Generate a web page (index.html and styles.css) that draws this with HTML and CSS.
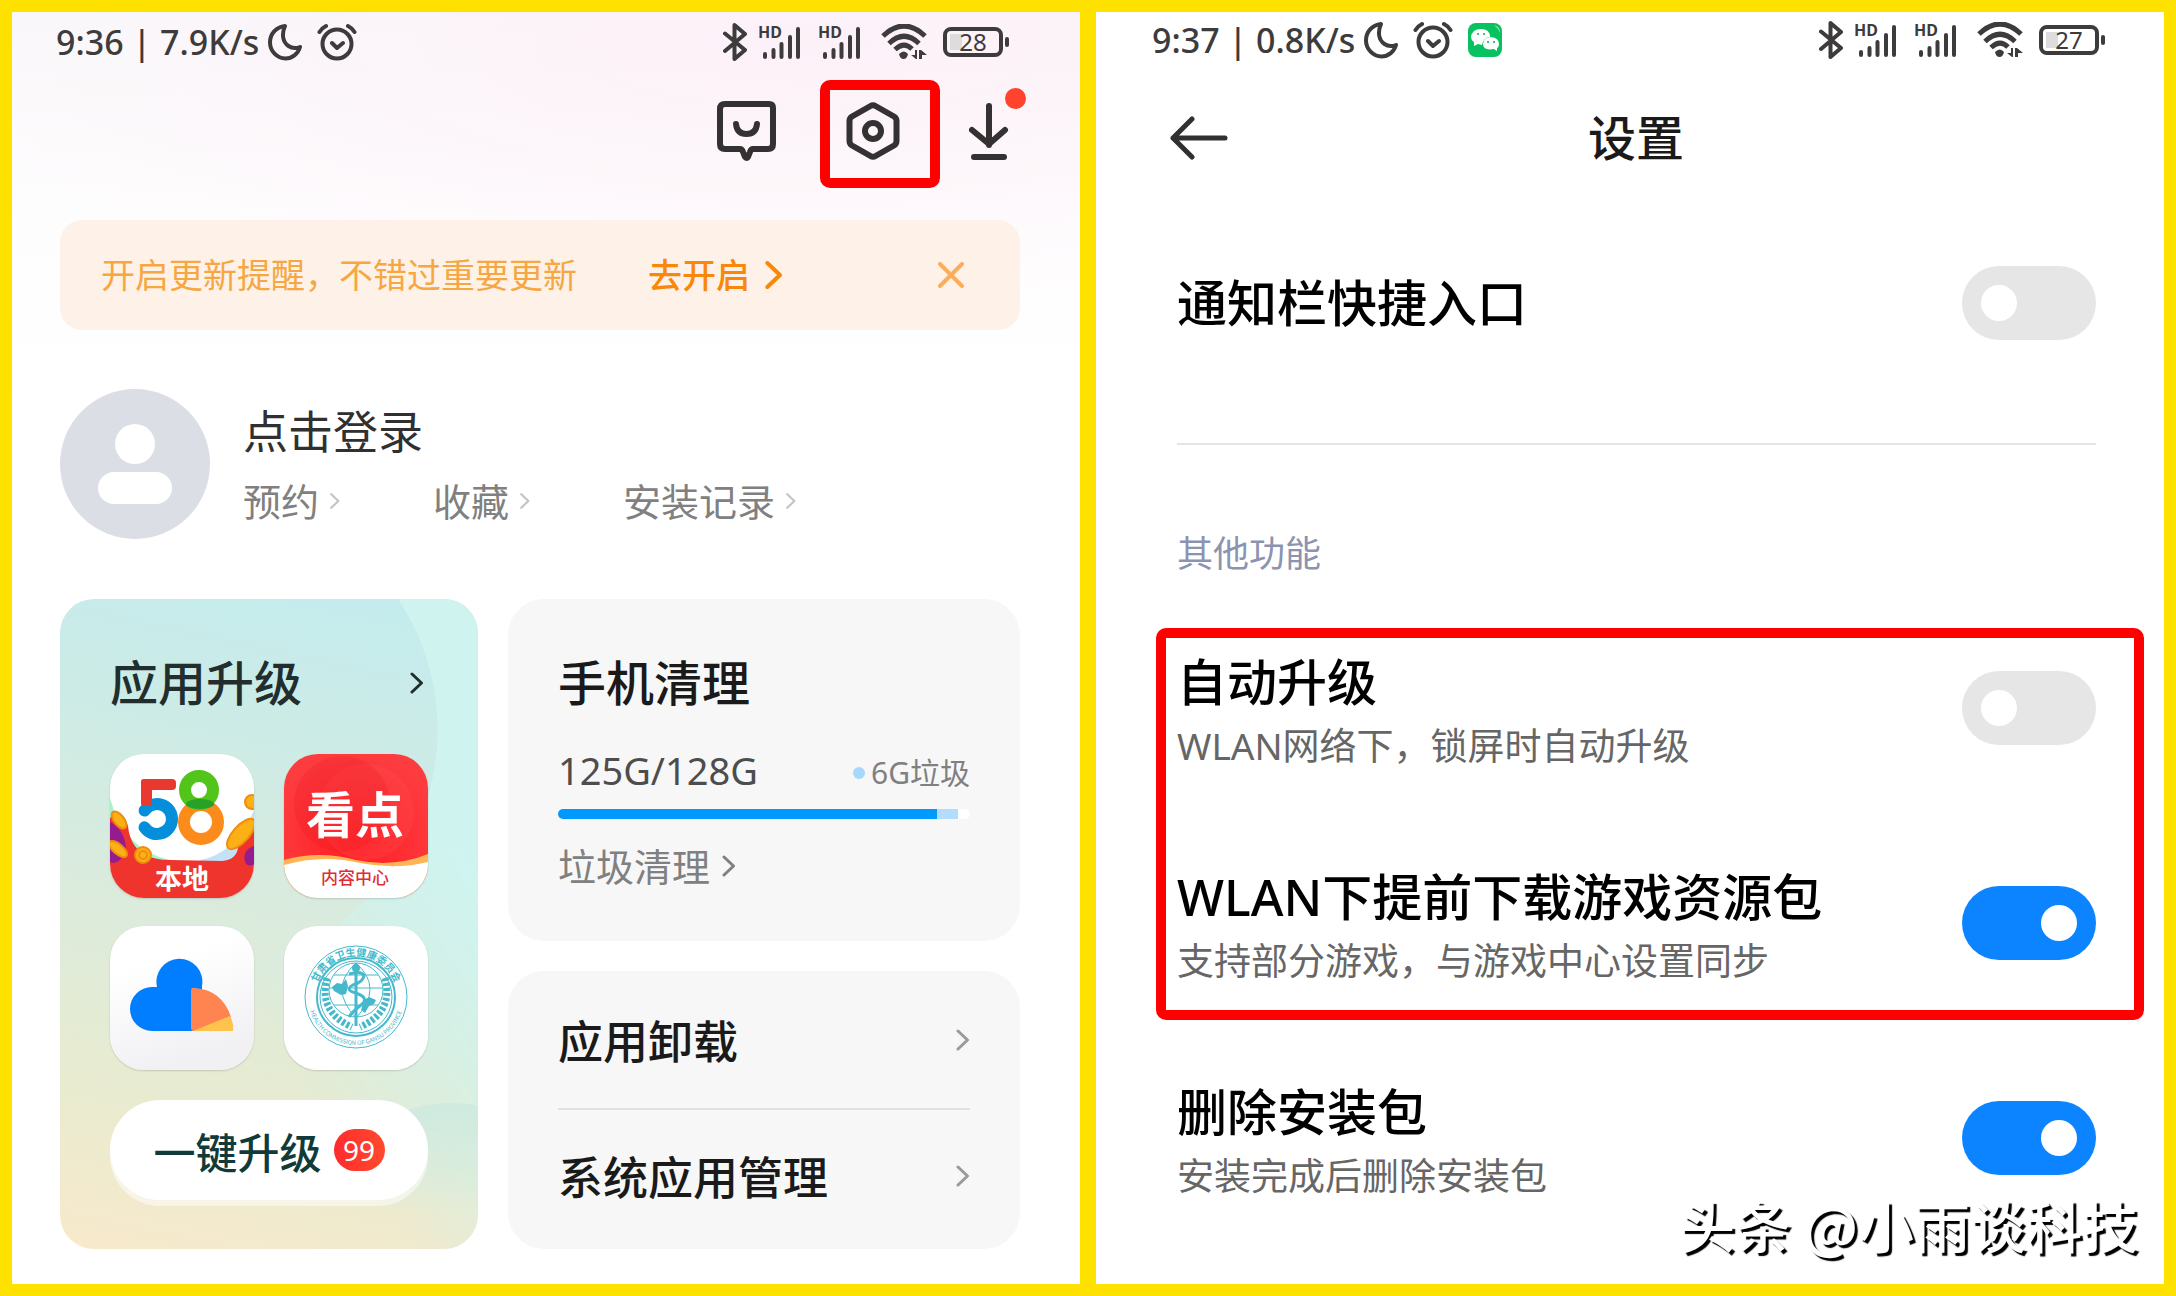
FILE: index.html
```html
<!DOCTYPE html>
<html lang="zh-CN">
<head>
  <meta charset="UTF-8" />
  <meta name="viewport" content="width=device-width, initial-scale=1.0" />
  <title>应用商店设置</title>
  <link rel="stylesheet" href="styles.css">
</head>
<body>

<!-- Shared icons -->
<svg class="sprite" aria-hidden="true">
  <symbol id="i-moon" viewBox="0 0 34 38">
    <path d="M17 3C8 4 2 11 2 19.500C2 28 9 35.500 17.500 35.500C24 35.500 30 31 32 24C28 25.500 24 25.500 20.500 23C14.500 19 13.500 11 17 3Z" fill="none" stroke="currentColor" stroke-width="4" stroke-linejoin="round"/>
  </symbol>
  <symbol id="i-alarm" viewBox="0 0 40 38">
    <g fill="none" stroke="currentColor" stroke-width="4" stroke-linecap="round" stroke-linejoin="round">
      <circle cx="20" cy="21" r="14.500"/>
      <path d="M2.500 9Q5 5 9 3M37.500 9Q35 5 31 3M15 20l5 5 6-5"/>
    </g>
  </symbol>
  <symbol id="i-bt" viewBox="0 0 24 38">
    <path d="M2 10.500L22 27 11.500 36V2L22 11 2 28" fill="none" stroke="currentColor" stroke-width="4" stroke-linejoin="round" stroke-linecap="round"/>
  </symbol>
  <symbol id="i-hd" viewBox="0 0 41 34">
    <text x="-1" y="13" font-size="16" font-weight="700" fill="currentColor">HD</text>
    <path d="M6 32V29M14.500 32V25M22.500 32V19M31 32V12M39 32V4" stroke="currentColor" stroke-width="4" stroke-linecap="round"/>
  </symbol>
  <symbol id="i-wifi" viewBox="0 0 46 36">
    <path d="M2 12Q23-8 44 12M8 19.500Q23 5 38 19.500M14 25.500Q23 17 31 25" fill="none" stroke="currentColor" stroke-width="5"/>
    <path d="M18 30Q23 25 27 30Q26 35 22.500 35Q19 35 18 30ZM38 35V26H40L46 31H41V35ZM36 26V35H35L30 31H34V26Z" fill="currentColor"/>
  </symbol>
  <symbol id="i-chevron" viewBox="0 0 14 24">
    <path d="M2 3l9.500 9L2 21" fill="none" stroke="currentColor" stroke-width="3" stroke-linecap="round" stroke-linejoin="round"/>
  </symbol>
</svg>

<main class="compare">

  <!-- Left: "mine" page -->
  <section class="phone mine">
    <div class="status">
      <div class="status-left">
        <span>9:36 | 7.9K/s</span>
        <svg class="moon"><use href="#i-moon"/></svg>
        <svg class="alarm"><use href="#i-alarm"/></svg>
      </div>
      <div class="status-right">
        <svg class="bt"><use href="#i-bt"/></svg>
        <svg class="hd"><use href="#i-hd"/></svg>
        <svg class="hd"><use href="#i-hd"/></svg>
        <svg class="wifi"><use href="#i-wifi"/></svg>
        <span class="battery">28</span>
      </div>
    </div>

    <nav class="tools">
      <button type="button" aria-label="消息">
        <svg width="60" height="62" viewBox="0 0 60 62" fill="none" stroke="currentColor" stroke-width="6" stroke-linecap="round" stroke-linejoin="round">
          <path d="M8 4H52Q56 4 56 8V44Q56 49 51 49H36Q34 49 33 52L31 57Q30 59 28 57L26 52Q25 49 23 49H8Q3 49 3 44V9Q3 4 8 4Z"/>
          <path d="M19 24Q20 34 29.500 34Q39 34 40 24"/>
        </svg>
      </button>
      <button type="button" class="marked" aria-label="设置">
        <svg width="54" height="58" viewBox="0 0 54 58" fill="none" stroke="currentColor" stroke-width="6" stroke-linejoin="round">
          <path d="M24.500 4Q27 2.500 29.500 4L48 14.500Q50.500 16 50.500 19V39Q50.500 42 48 43.500L29.500 54Q27 55.500 24.500 54L6 43.500Q3.500 42 3.500 39V19Q3.500 16 6 14.500Z"/>
          <circle cx="27" cy="29" r="8"/>
        </svg>
      </button>
      <button type="button" class="download" aria-label="下载">
        <svg width="40" height="58" viewBox="0 0 40 58" fill="none" stroke="currentColor" stroke-width="6" stroke-linecap="round" stroke-linejoin="round">
          <path d="M20 4V43M3 28L20 42 36 28M5 55H35"/>
        </svg>
      </button>
    </nav>

    <div class="notice">
      <span>开启更新提醒，不错过重要更新</span>
      <a href="#" class="notice-link">去开启 <svg class="chev-lg"><use href="#i-chevron"/></svg></a>
      <button type="button" class="notice-close" aria-label="关闭">
        <svg width="26" height="26" viewBox="0 0 26 26"><path d="M2 2L24 24M24 2L2 24" stroke="currentColor" stroke-width="4" stroke-linecap="round"/></svg>
      </button>
    </div>

    <div class="profile">
      <svg class="avatar" viewBox="0 0 150 150" aria-hidden="true">
        <circle cx="75" cy="75" r="75" fill="#dbdfe5"/>
        <circle cx="75" cy="55" r="20" fill="#fff"/>
        <rect x="38" y="83" width="74" height="32" rx="16" fill="#fff"/>
      </svg>
      <div>
        <a href="#" class="login">点击登录</a>
        <div class="links">
          <a href="#">预约<svg class="chev-sm"><use href="#i-chevron"/></svg></a>
          <a href="#">收藏<svg class="chev-sm"><use href="#i-chevron"/></svg></a>
          <a href="#">安装记录<svg class="chev-sm"><use href="#i-chevron"/></svg></a>
        </div>
      </div>
    </div>

    <div class="cards">
      <section class="upgrade">
        <a href="#" class="card-head"><h2>应用升级</h2><svg class="chev"><use href="#i-chevron"/></svg></a>
        <div class="apps">
          <!-- 58 local -->
          <svg class="app" viewBox="0 0 144 144">
            <rect width="144" height="144" fill="#fff"/>
            <path d="M0 44Q14 96 60 106L40 112 0 100Z" fill="#a8f3c8"/>
            <path d="M90 106Q125 100 144 56V110H90Z" fill="#c3e2f8"/>
            <path d="M0 64Q12 52 18 72Q20 92 34 100Q44 106 60 106L112 107Q126 106 128 94Q134 78 144 70V144H0Z" fill="#ee342c"/>
            <path d="M0 68Q16 76 16 98Q8 112 0 108ZM144 92Q132 96 135 108Q138 114 144 110Z" fill="#951b91"/>
            <g fill="#fbb116" stroke="#f08c10" stroke-width="2">
              <ellipse cx="9" cy="66" rx="5" ry="10" transform="rotate(-38 9 66)"/>
              <ellipse cx="8" cy="95" rx="5" ry="11" transform="rotate(-50 8 95)"/>
              <ellipse cx="131" cy="80" rx="8" ry="19" transform="rotate(42 131 80)"/>
              <circle cx="142" cy="48" r="7"/>
              <circle cx="33" cy="101" r="8"/>
              <circle cx="33" cy="101" r="4"/>
            </g>
            <g fill="none">
              <circle cx="91" cy="68" r="17" stroke="#fb8c1c" stroke-width="12"/>
              <circle cx="89" cy="36" r="14" stroke="#52c41a" stroke-width="12"/>
              <circle cx="47" cy="65" r="15" stroke="#058fda" stroke-width="12" stroke-linecap="round" stroke-dasharray="76 19" transform="rotate(214 47 65)"/>
            </g>
            <ellipse cx="90" cy="50" rx="14" ry="5" fill="#27a127"/>
            <rect x="31" y="25" width="11" height="27" rx="3" fill="#e9392f"/>
            <rect x="31" y="25" width="35" height="11" rx="4" fill="#e9392f"/>
            <text x="72" y="135" class="app-local">本地</text>
          </svg>
          <!-- content centre -->
          <svg class="app" viewBox="0 0 144 144">
            <defs>
              <radialGradient id="red" cx="50%" cy="60%" r="60%">
                <stop offset="0" stop-color="#ff1c20"/><stop offset="1" stop-color="#fd3c40"/>
              </radialGradient>
            </defs>
            <rect width="144" height="144" fill="url(#red)"/>
            <circle cx="82" cy="58" r="48" fill="#ff5558" opacity=".25"/>
            <circle cx="58" cy="50" r="48" fill="#e8141c" opacity=".2"/>
            <path d="M0 106Q35 96 72 106Q110 114 144 100V144H0Z" fill="#ffb455"/>
            <path d="M0 111Q38 100 76 109Q112 116 144 108V144H0Z" fill="#fff"/>
            <text x="71" y="79" class="app-kan">看点</text>
            <text x="71" y="130" class="app-center">内容中心</text>
          </svg>
          <!-- weather -->
          <svg class="app" viewBox="0 0 144 144">
            <defs>
              <linearGradient id="pale" x1="0" y1="0" x2=".3" y2="1">
                <stop offset=".3" stop-color="#fff"/><stop offset="1" stop-color="#f1f1f4"/>
              </linearGradient>
            </defs>
            <rect width="144" height="144" fill="url(#pale)"/>
            <path d="M42 105A22 22 0 0 1 42 61H47A23 23 0 1 1 92 60V105Z" fill="#007eff"/>
            <path d="M81 65Q81 61 85 62Q112 64 121 91L84 105Q81 105 81 102Z" fill="#ff844f"/>
            <path d="M83 105L120 90Q124 98 123 105Z" fill="#ffc34d"/>
          </svg>
          <!-- health commission -->
          <svg class="app" viewBox="0 0 144 144">
            <defs>
              <path id="arc-top" d="M31 71A41 41 0 0 1 113 71"/>
              <path id="arc-bottom" d="M24 71A48 48 0 0 0 120 71"/>
            </defs>
            <rect width="144" height="144" fill="#fff"/>
            <g fill="none" stroke="#45b9cb">
              <circle cx="72" cy="71" r="51" stroke-width="1"/>
              <circle cx="72" cy="71" r="39" stroke-width="2"/>
              <circle cx="72" cy="71" r="36" stroke-width="1"/>
              <ellipse cx="72" cy="64" rx="27" ry="27" stroke-width="1"/>
              <path d="M45 62H99M50 49H94M50 79H94M72 37V92M72 37Q44 62 72 92M72 37Q100 62 72 92" stroke-width="1"/>
              <path d="M43 52Q34 86 68 101M101 52Q110 86 76 101" stroke-width="7" stroke-dasharray="3 2"/>
              <path d="M65 48Q78 44 80 50Q79 56 69 59Q60 64 72 67Q86 72 77 79Q68 86 65 91" stroke-width="3"/>
              <path d="M72 44V100" stroke-width="3"/>
            </g>
            <path d="M48 61l5-4 5 1 4-5 2 7-2 8-5 1-7-4ZM77 84l3-10 5-3 7 3-2 4-5 2-4 7Z" fill="#45b9cb"/>
            <circle cx="72" cy="42" r="4" fill="#45b9cb"/>
            <text class="seal-cn"><textPath href="#arc-top" startOffset="50%">甘肃省卫生健康委员会</textPath></text>
            <text class="seal-en"><textPath href="#arc-bottom" startOffset="50%">HEALTH COMMISSION OF GANSU PROVINCE</textPath></text>
          </svg>
        </div>
        <button type="button" class="upgrade-all">一键升级<span class="count">99</span></button>
      </section>

      <div class="side">
        <section class="card clean">
          <h2>手机清理</h2>
          <div class="usage">
            <span class="used">125G/128G</span>
            <span class="junk">6G垃圾</span>
          </div>
          <div class="bar"><i class="bar-used" style="width: 92%"></i><i class="bar-junk" style="width: 5%"></i></div>
          <a href="#" class="clean-link">垃圾清理<svg class="chev"><use href="#i-chevron"/></svg></a>
        </section>
        <section class="card menu">
          <a href="#">应用卸载<svg class="chev"><use href="#i-chevron"/></svg></a>
          <a href="#">系统应用管理<svg class="chev"><use href="#i-chevron"/></svg></a>
        </section>
      </div>
    </div>
  </section>

  <!-- Right: settings page -->
  <section class="phone settings">
    <div class="status">
      <div class="status-left">
        <span>9:37 | 0.8K/s</span>
        <svg class="moon"><use href="#i-moon"/></svg>
        <svg class="alarm"><use href="#i-alarm"/></svg>
        <svg class="wechat" viewBox="0 0 34 34">
          <rect width="34" height="34" rx="8" fill="#08c160"/>
          <path d="M26 2Q32 3 32 10Q30 5 26 2Z" fill="#7fe0ae"/>
          <path d="M13 6Q22 6 22 14Q16 14 14 22L10 21 6 23V19Q3 17 3 14Q4 6 13 6Z" fill="#fff"/>
          <path d="M23 14Q31 15 31 21Q31 24 29 25V28L26 26Q15 28 15 21Q16 14 23 14Z" fill="#fff"/>
          <g fill="#08a853"><circle cx="10" cy="11" r="1"/><circle cx="16" cy="11" r="1"/><circle cx="20" cy="19" r="1"/><circle cx="26" cy="19" r="1"/></g>
        </svg>
      </div>
      <div class="status-right">
        <svg class="bt"><use href="#i-bt"/></svg>
        <svg class="hd"><use href="#i-hd"/></svg>
        <svg class="hd"><use href="#i-hd"/></svg>
        <svg class="wifi"><use href="#i-wifi"/></svg>
        <span class="battery">27</span>
      </div>
    </div>

    <header class="topbar">
      <a href="#" class="back" aria-label="返回">
        <svg width="58" height="46" viewBox="0 0 58 46" fill="none" stroke="currentColor" stroke-width="5" stroke-linecap="round" stroke-linejoin="round"><path d="M22 4L3 23 22 42M3 23H55"/></svg>
      </a>
      <h1>设置</h1>
    </header>

    <div class="list">
      <div class="row row-first">
        <label for="shortcut" class="row-title">通知栏快捷入口</label>
        <input type="checkbox" id="shortcut" class="switch">
      </div>

      <h3>其他功能</h3>

      <div class="group">
        <div class="row">
          <label for="auto">
            <span class="row-title">自动升级</span>
            <span class="row-desc">WLAN网络下，锁屏时自动升级</span>
          </label>
          <input type="checkbox" id="auto" class="switch">
        </div>
        <div class="row">
          <label for="preload">
            <span class="row-title">WLAN下提前下载游戏资源包</span>
            <span class="row-desc">支持部分游戏，与游戏中心设置同步</span>
          </label>
          <input type="checkbox" id="preload" class="switch" checked>
        </div>
      </div>
      <div class="row">
        <label for="remove">
          <span class="row-title">删除安装包</span>
          <span class="row-desc">安装完成后删除安装包</span>
        </label>
        <input type="checkbox" id="remove" class="switch" checked>
      </div>
    </div>

    <div class="watermark">头条 @小雨谈科技</div>
  </section>

</main>

</body>
</html>
```
FILE: styles.css
```css
* {
  margin: 0;
  padding: 0;
  box-sizing: border-box;
}

body {
  font-family: "Noto Sans", "Noto Sans CJK SC", sans-serif;
  background: #ffe100;
  color: #1a1a1a;
}

a {
  color: inherit;
  text-decoration: none;
}

button {
  border: none;
  background: none;
  font: inherit;
  color: inherit;
  cursor: pointer;
}

svg {
  display: block;
  flex: none;
}

h1, h2 {
  font-size: 48px;
  line-height: 60px;
  font-weight: 500;
}

.sprite {
  display: none;
}

.compare {
  display: grid;
  grid-template-columns: 1fr 1fr;
  gap: 16px;
  min-height: 100vh;
  padding: 12px;
}

.phone {
  position: relative;
  background: #fff;
}

/* status bar */
.status {
  display: flex;
  justify-content: space-between;
  align-items: center;
  color: #3d3b3c;
}

.status-left,
.status-right {
  display: flex;
  align-items: center;
}

.status-left {
  font-size: 34px;
  line-height: 40px;
  font-weight: 500;
}

.moon {
  width: 34px;
  height: 38px;
  margin-left: 9px;
}

.alarm {
  width: 40px;
  height: 38px;
  margin-left: 15px;
}

.wechat {
  width: 34px;
  height: 34px;
  margin-left: 15px;
}

.bt {
  width: 24px;
  height: 38px;
  margin-right: 12px;
}

.hd {
  width: 41px;
  height: 34px;
  margin-right: 19px;
}

.wifi {
  width: 46px;
  height: 36px;
  margin-left: 2px;
  margin-right: 16px;
}

.battery {
  position: relative;
  width: 60px;
  height: 30px;
  margin-right: 6px;
  border: 4px solid #3d3b3c;
  border-radius: 8px;
  background: linear-gradient(#ddd, #ddd) 3px 3px / 12px 16px no-repeat;
  font-size: 24px;
  line-height: 22px;
  text-align: center;
}

.battery::after {
  content: "";
  position: absolute;
  right: -10px;
  top: 6px;
  width: 4px;
  height: 10px;
  border-radius: 2px;
  background: #3d3b3c;
}

/* left phone */
.mine {
  padding: 0 60px 35px 48px;
  background:
    radial-gradient(ellipse 900px 260px at 75% 30px, #fdf1f8, rgba(253, 241, 248, 0)),
    linear-gradient(#f9f8fa, #fefdfe 200px, #fff 380px);
}

.mine .status {
  height: 60px;
  margin: 0 11px 0 -4px;
}

.tools {
  display: flex;
  justify-content: flex-end;
  align-items: center;
  gap: 69px;
  height: 102px;
  margin-top: 8px;
  padding-right: 11px;
  color: #333132;
}

.tools button {
  position: relative;
}

/* red frame round the settings button */
.marked::after {
  content: "";
  position: absolute;
  top: -22px;
  bottom: -28px;
  left: -26px;
  right: -40px;
  border: 10px solid #f00;
  border-radius: 10px;
}

.download::after {
  content: "";
  position: absolute;
  top: -14px;
  right: -17px;
  width: 21px;
  height: 21px;
  border-radius: 50%;
  background: #ff432c;
}

.notice {
  display: flex;
  align-items: center;
  height: 110px;
  margin-top: 38px;
  padding: 0 56px 0 41px;
  border-radius: 22px;
  background: #fef1e8;
  font-size: 34px;
  line-height: 50px;
  color: #f6a742;
}

.notice-link {
  display: flex;
  align-items: center;
  gap: 14px;
  margin-left: 71px;
  font-weight: 500;
  color: #f8870a;
}

.notice-close {
  margin-left: auto;
  color: #fcad59;
}

.chev-lg {
  width: 20px;
  height: 32px;
}

.chev {
  width: 14px;
  height: 24px;
}

.chev-sm {
  width: 12px;
  height: 18px;
  color: #c4c4c4;
}

.profile {
  display: flex;
  align-items: center;
  gap: 33px;
  margin-top: 59px;
}

.avatar {
  width: 150px;
  height: 150px;
}

.login {
  display: block;
  font-size: 45px;
  line-height: 60px;
  color: #303030;
}

.links {
  display: flex;
  gap: 92px;
  margin-top: 14px;
  font-size: 38px;
  line-height: 50px;
  color: #808080;
}

.links a {
  display: flex;
  align-items: center;
  gap: 10px;
}

.cards {
  display: grid;
  grid-template-columns: 418fr 512fr;
  gap: 30px;
  margin-top: 60px;
}

.upgrade {
  position: relative;
  padding: 54px 50px 49px;
  border-radius: 34px;
  overflow: hidden;
  background: linear-gradient(12deg, #f8e9cb, #e9ebd0 22%, #dcebdc 48%, #cdebe6 75%, #c3ecee);
}

/* pale sweep outside the big circle */
.upgrade::before {
  content: "";
  position: absolute;
  inset: 0;
  background: radial-gradient(circle at 140px 131px, rgba(207, 246, 244, 0) 237px, #cff4f0 238px);
  -webkit-mask-image: linear-gradient(to bottom left, #000 20%, transparent 58%);
  mask-image: linear-gradient(to bottom left, #000 20%, transparent 58%);
}

/* small hill in the bottom corner */
.upgrade::after {
  content: "";
  position: absolute;
  right: -68px;
  bottom: 10px;
  width: 192px;
  height: 136px;
  border-radius: 50%;
  background: linear-gradient(#cfeadf, rgba(230, 235, 210, 0) 80%);
}

.card-head {
  position: relative;
  display: flex;
  justify-content: space-between;
  align-items: center;
  padding-right: 4px;
  color: #222e2e;
}

.apps {
  position: relative;
  display: grid;
  grid-template-columns: 1fr 1fr;
  gap: 28px 30px;
  margin-top: 41px;
}

.app {
  width: 100%;
  border-radius: 34px;
  box-shadow: 0 1px 2px rgba(0, 0, 0, .15);
}

.app text {
  text-anchor: middle;
  font-family: "Noto Sans CJK SC", sans-serif;
}

.app-local {
  font-size: 27px;
  font-weight: 700;
  fill: #fff;
}

.app-kan {
  font-size: 49px;
  font-weight: 700;
  fill: #fff;
}

.app-center {
  font-size: 17px;
  font-weight: 500;
  fill: #e02d35;
}

.seal-cn {
  font-size: 10px;
  font-weight: 700;
  fill: #45b9cb;
}

.seal-en {
  font-size: 6px;
  fill: #45b9cb;
}

.upgrade-all {
  position: relative;
  z-index: 1;
  display: flex;
  justify-content: center;
  align-items: center;
  gap: 12px;
  width: 100%;
  height: 100px;
  margin-top: 30px;
  border-radius: 50px;
  background: #fff;
  box-shadow: 0 6px 0 rgba(255, 255, 255, .5);
  font-size: 42px;
  font-weight: 500;
  color: #103b38;
}

.count {
  width: 51px;
  border-radius: 21px;
  background: linear-gradient(to right, #ff2b2e, #ff4a2d);
  font-size: 28px;
  line-height: 42px;
  font-weight: 400;
  color: #fff;
}

.side {
  display: flex;
  flex-direction: column;
  gap: 30px;
}

.card {
  padding: 0 50px;
  border-radius: 36px;
  background: #f7f7f7;
}

.clean {
  padding-top: 54px;
  padding-bottom: 50px;
}

.usage {
  display: flex;
  justify-content: space-between;
  align-items: center;
  margin-top: 32px;
  line-height: 50px;
}

.used {
  font-size: 38px;
  color: #4d4d4d;
}

.junk {
  display: flex;
  align-items: center;
  gap: 6px;
  padding-top: 6px;
  font-size: 30px;
  line-height: 40px;
  color: #808080;
}

.junk::before {
  content: "";
  width: 12px;
  height: 12px;
  border-radius: 50%;
  background: #a6d8fb;
}

.bar {
  display: flex;
  height: 10px;
  margin-top: 14px;
  border-radius: 5px;
  overflow: hidden;
  background: #fff;
}

.bar-used {
  background: #09f;
}

.bar-junk {
  background: #b3ddff;
}

.clean-link {
  display: flex;
  align-items: center;
  gap: 12px;
  margin-top: 22px;
  font-size: 38px;
  line-height: 50px;
  color: #808080;
}

.menu {
  padding-bottom: 8px;
}

.menu a {
  display: flex;
  justify-content: space-between;
  align-items: center;
  height: 137px;
  font-size: 45px;
  font-weight: 500;
}

.menu a + a {
  height: 133px;
  border-top: 2px solid #e2e2e2;
}

.menu .chev {
  color: #999;
}

/* right phone */
.settings .status {
  height: 56px;
  padding: 0 59px 0 56px;
}

.topbar {
  display: grid;
  grid-template-columns: 1fr auto 1fr;
  align-items: center;
  height: 140px;
  padding: 0 62px 0 74px;
}

.back {
  color: #303030;
}

.list {
  padding: 0 68px 38px 81px;
}

.row {
  display: flex;
  justify-content: space-between;
  align-items: center;
  height: 215px;
}

.row-first {
  height: 190px;
}

.row-title {
  display: block;
  font-size: 50px;
  line-height: 60px;
  font-weight: 500;
  color: #000;
}

.row-desc {
  display: block;
  margin-top: 9px;
  font-size: 37px;
  line-height: 50px;
  color: #666;
}

.group .row label,
.list > .row label:not(.row-title) {
  padding-top: 8px;
}

.list h3 {
  margin: 45px 0 21px;
  padding-top: 84px;
  border-top: 2px solid #e5e5e5;
  font-size: 36px;
  line-height: 50px;
  font-weight: 400;
  color: #8c93b0;
}

.group {
  position: relative;
}

/* red frame round the two options */
.group::after {
  content: "";
  position: absolute;
  top: 28px;
  bottom: 10px;
  left: -21px;
  right: -48px;
  border: 10px solid #f00;
  border-radius: 10px;
  pointer-events: none;
}

.switch {
  appearance: none;
  display: flex;
  align-items: center;
  flex: none;
  width: 134px;
  height: 74px;
  padding: 0 19px;
  border-radius: 37px;
  background: #e6e6e6;
  cursor: pointer;
}

.switch::before {
  content: "";
  width: 36px;
  height: 36px;
  border-radius: 50%;
  background: #fff;
}

.switch:checked {
  justify-content: flex-end;
  background: #0d84ff;
}

.watermark {
  position: absolute;
  right: 26px;
  bottom: 30px;
  font-family: "Noto Sans CJK SC", sans-serif;
  font-size: 56px;
  line-height: 60px;
  font-weight: 500;
  white-space: nowrap;
  color: #fff;
  text-shadow: 3px 3px 1px #000;
}
```
